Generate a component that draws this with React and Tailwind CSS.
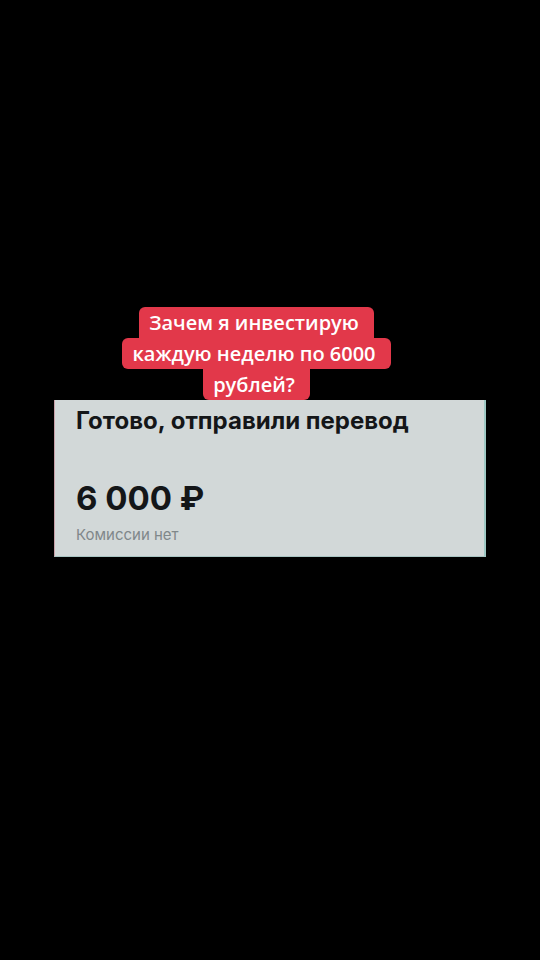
export default function App() {
  return (
    <div className="w-[540px] h-[960px] bg-black overflow-hidden flex flex-col" style={{ fontFamily: "Inter, 'Noto Sans', sans-serif" }}>
      <div className="pt-[307px] pr-[27px] flex flex-col items-center text-white text-[20px] leading-[31px] font-semibold" style={{ fontFamily: "'Open Sans', 'Noto Sans', sans-serif" }}>
        <span className="bg-[#e2384a] rounded-t-[6px] pl-[10px] pr-[15px] h-[31px]">Зачем я инвестирую</span>
        <span className="bg-[#e2384a] rounded-[6px] pl-[10px] pr-[15px] h-[31px]">каждую неделю по 6000</span>
        <span className="bg-[#e2384a] rounded-b-[6px] pl-[10px] pr-[15px] h-[31px]">рублей?</span>
      </div>
      <div className="ml-[54px] w-[432px] h-[157px] bg-[#d2d8d8] border-l border-l-[#c8a0a8] border-r-2 border-r-[#9ec8c4] border-b border-b-[#a8c4c2] flex flex-col px-[21px]">
        <div className="mt-[6px] text-[24px] leading-[30px] font-bold text-[#141618]">Готово, отправили перевод</div>
        <div className="mt-[42px] text-[33px] leading-[40px] font-bold text-[#141618]">6 000 ₽</div>
        <div className="mt-[8px] text-[15px] leading-[17px] text-[#80878a]">Комиссии нет</div>
      </div>
    </div>
  );
}
